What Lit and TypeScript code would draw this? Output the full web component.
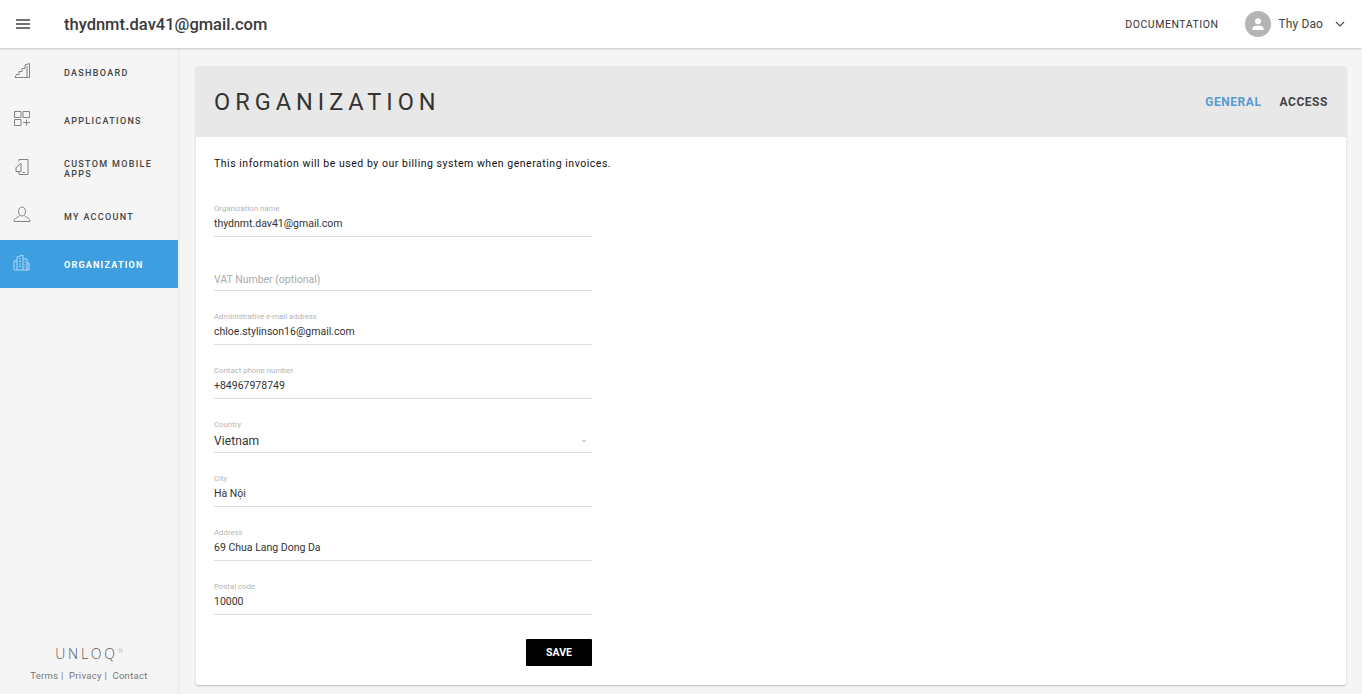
import { LitElement, html, css, svg } from "lit";
import { customElement } from "lit/decorators.js";

const navIcons: Record<string, unknown> = {
  dash: svg`<path d="M2 15.5H16.5V1.5L12 3V6.5H9V9.5H6V12.5H3.5L2 15.5M14 4V15" />`,
  apps: svg`<path d="M1.5 1.5H8V7.5H1.5ZM10 1.5H16.5V7.5H10ZM1.5 9.5H8V15.5H1.5ZM10 12.5H17M13.5 9.5V15.5" />`,
  mobile: svg`<path d="M6 3.5V1.5H15V16.5H6V13.5M3 9.5L8 5.5V13.5H3ZM9.5 14.5H12" />`,
  account: svg`<path d="M5.5 5.5C5.5 3 7 1 9 1S12.5 3 12.5 5.5 11 10 9 10 5.5 8 5.5 5.5ZM6.5 9.5C6 11.5 1 11.5 1 15.5H17C17 11.5 12 11.5 11.5 9.5" />`,
  org: svg`<path d="M4 16V3L10 1V16M10 5H14V16M1 16V7H4M2 16H16V9H14M6 5H8M6 7.5H8M6 10H8M6 12.5H8M11.5 8H12.5M11.5 10.5H12.5M11.5 13H12.5" />`,
};

@customElement("app-root")
export class AppRoot extends LitElement {
  static styles = css`
    :host { display: block; width: 1362px; height: 694px; overflow: hidden; background: #f5f5f5; font-family: Roboto, "Liberation Sans", sans-serif; color: #333; }
    .top { height: 48px; background: #fff; display: flex; align-items: center; box-shadow: 0 1px 2px rgba(0,0,0,.2); position: relative; z-index: 2; padding-right: 17px; }
    .burger { width: 64px; display: flex; padding-left: 16px; box-sizing: border-box; }
    .title { font-size: 16.5px; font-weight: 500; color: #3a3a3a; flex: 1; }
    .doc { font-size: 10.5px; letter-spacing: .55px; color: #333; margin-right: 27px; }
    .avatar { width: 26px; height: 26px; border-radius: 50%; background: #b4b4b4; display: flex; align-items: center; justify-content: center; margin-right: 7px; }
    .user { font-size: 12px; letter-spacing: .12px; color: #444; margin-right: 12px; }
    .body { display: flex; height: 646px; }
    .side { width: 178px; flex: none; border-right: 2px solid #eee; box-sizing: content-box; display: flex; flex-direction: column; }
    .item { height: 48px; box-sizing: border-box; padding-top: 2px; display: flex; align-items: center; color: #444; font-size: 9px; font-weight: 500; letter-spacing: 1.3px; line-height: 10px; }
    .item.on { background: #3d9fe0; color: #fff; font-weight: 700; letter-spacing: 1.22px; }
    .ico { width: 64px; padding-left: 13px; box-sizing: border-box; flex: none; display: flex; position: relative; top: -2px; }
    .ico svg { fill: none; stroke: #777; stroke-width: .9; }
    .on .ico svg { stroke: #bfe0f6; }
    .foot { margin-top: auto; text-align: center; padding-bottom: 12px; }
    .logo { font-family: "Open Sans", sans-serif; font-size: 14px; font-weight: 300; letter-spacing: 2.8px; color: #555; line-height: 18px; }
    .logo sup { font-size: 6px; line-height: 0; letter-spacing: 0; color: #888; }
    .links { font-size: 9.5px; letter-spacing: .3px; color: #777; margin-top: 7px; line-height: 12px; }
    .main { flex: 1; padding: 18px 16px 9px; min-width: 0; }
    .card { background: #fff; height: 619px; border-radius: 2px; box-shadow: 0 1px 2px rgba(0,0,0,.22); display: flex; flex-direction: column; overflow: hidden; }
    .head { height: 71px; flex: none; background: #e8e8e8; display: flex; align-items: center; padding: 0 18px; }
    .h1 { flex: 1; font-size: 23.5px; font-weight: 400; letter-spacing: 5px; color: #333; }
    .tab { font-size: 12px; font-weight: 700; letter-spacing: .55px; color: #444; margin-left: 18px; }
    .tab.on { color: #5a9bd0; }
    .content { padding: 20px 18px 0; }
    .intro { font-size: 10.5px; letter-spacing: .53px; color: #111; line-height: 14px; margin-bottom: 33px; }
    form { width: 378px; display: flex; flex-direction: column; }
    .field { height: 32px; border-bottom: 1px solid #ddd; position: relative; margin-bottom: 21px; }
    .lab { font-size: 7.8px; color: #b5b5b5; line-height: 9px; height: 9px; }
    .val { font-size: 10.5px; color: #333; line-height: 14px; margin-top: 4px; }
    .val.big { font-size: 12px; letter-spacing: .1px; margin-top: 5px; }
    .ph { font-size: 10.5px; color: #aaa; line-height: 14px; padding-top: 15px; }
    .arrow { position: absolute; right: 6px; top: 20px; width: 0; height: 0; border: 2.5px solid transparent; border-top: 3px solid #ccc; border-bottom: 0; }
    .save { align-self: flex-end; width: 66px; height: 27px; background: #000; color: #fff; border: 0; border-radius: 1px; font: 700 10.5px Roboto, sans-serif; margin-top: 3px; padding: 0; }
  `;

  render() {
    const nav = [
      ["dash", "DASHBOARD"],
      ["apps", "APPLICATIONS"],
      ["mobile", "CUSTOM MOBILE APPS"],
      ["account", "MY ACCOUNT"],
      ["org", "ORGANIZATION"],
    ];
    const fields = [
      ["Organization name", "thydnmt.dav41@gmail.com"],
      ["", "VAT Number (optional)"],
      ["Administrative e-mail address", "chloe.stylinson16@gmail.com"],
      ["Contact phone number", "+84967978749"],
      ["Country", "Vietnam"],
      ["City", "Hà Nội"],
      ["Address", "69 Chua Lang Dong Da"],
      ["Postal code", "10000"],
    ];
    return html`
      <div class="top">
        <div class="burger"><svg width="14" height="12" viewBox="0 0 14 12"><path d="M0 2H14M0 6H14M0 10H14" stroke="#444" stroke-width="1.3"/></svg></div>
        <div class="title">thydnmt.dav41@gmail.com</div>
        <div class="doc">DOCUMENTATION</div>
        <div class="avatar"><svg width="14" height="14" viewBox="0 0 14 14"><circle cx="7" cy="4.2" r="3" fill="#fff"/><path d="M1.5 13V11.5C1.5 9.5 4.5 8.6 7 8.6S12.5 9.5 12.5 11.5V13Z" fill="#fff"/></svg></div>
        <div class="user">Thy Dao</div>
        <svg width="10" height="6" viewBox="0 0 10 6"><path d="M1 1L5 5L9 1" fill="none" stroke="#444" stroke-width="1.1"/></svg>
      </div>
      <div class="body">
        <aside class="side">
          ${nav.map(([k, t]) => html`<div class="item ${k === "org" ? "on" : ""}"><span class="ico"><svg width="18" height="18" viewBox="0 0 18 18">${navIcons[k]}</svg></span><span>${t}</span></div>`)}
          <div class="foot">
            <div class="logo">UNLOQ<sup>®</sup></div>
            <div class="links">Terms | &nbsp;Privacy | &nbsp;Contact</div>
          </div>
        </aside>
        <main class="main">
          <div class="card">
            <div class="head"><div class="h1">ORGANIZATION</div><span class="tab on">GENERAL</span><span class="tab">ACCESS</span></div>
            <div class="content">
              <div class="intro">This information will be used by our billing system when generating invoices.</div>
              <form>
                ${fields.map(([l, v]) => html`<div class="field">
                  ${l ? html`<div class="lab">${l}</div><div class="val ${l === "Country" ? "big" : ""}">${v}</div>` : html`<div class="ph">${v}</div>`}
                  ${l === "Country" ? html`<span class="arrow"></span>` : ""}
                </div>`)}
                <button class="save" type="button">SAVE</button>
              </form>
            </div>
          </div>
        </main>
      </div>
    `;
  }
}
